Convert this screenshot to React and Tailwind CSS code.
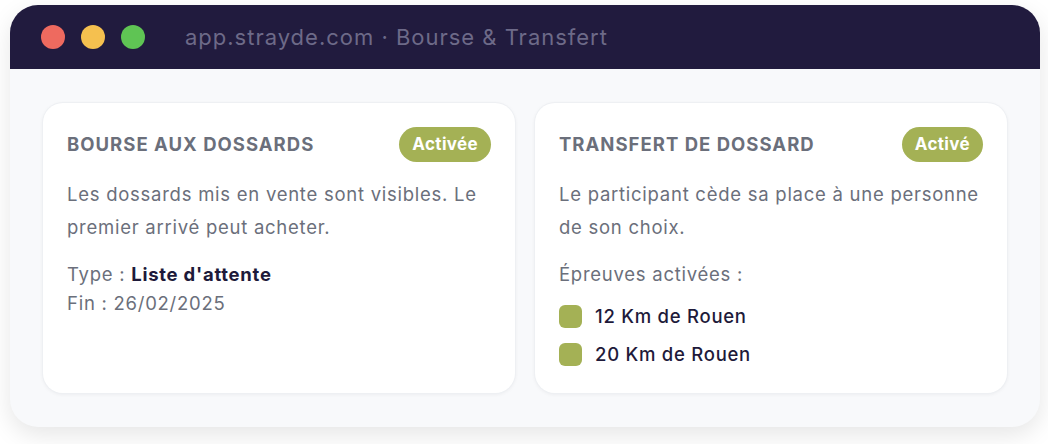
const Badge = ({ children }) => (
  <span className="inline-flex h-[35px] items-center rounded-full bg-[#a4b155] px-[13px] text-[17px] font-bold tracking-[0.02em] text-white">
    {children}
  </span>
);

const Card = ({ title, badge, children }) => (
  <div className="flex-1 rounded-[20px] bg-white px-6 pt-6 shadow-[0_1px_4px_rgba(15,23,42,0.07)] ring-1 ring-[#eef0f3]">
    <div className="flex items-center justify-between">
      <h3 className="text-[18.5px] font-bold uppercase tracking-[0.055em] text-[#6b6f7b]">{title}</h3>
      <Badge>{badge}</Badge>
    </div>
    {children}
  </div>
);

export default function App() {
  return (
    <div className="min-h-screen bg-white pl-[10px] pt-[5px] font-['Inter',sans-serif]">
      <div className="w-[1030px] overflow-hidden rounded-[28px] bg-[#f8f9fb] shadow-[0_8px_24px_rgba(0,0,0,0.10)]">
        {/* Title bar */}
        <div className="flex h-[64px] items-center bg-[#211b3e] pl-[31px]">
          <div className="flex gap-4">
            <span className="h-6 w-6 rounded-full bg-[#ee6a5f]" />
            <span className="h-6 w-6 rounded-full bg-[#f5c04f]" />
            <span className="h-6 w-6 rounded-full bg-[#5fc454]" />
          </div>
          <span className="ml-10 text-[22px] tracking-[0.045em] text-[#6d6a88]">app.strayde.com · Bourse &amp; Transfert</span>
        </div>

        {/* Content */}
        <div className="flex gap-5 px-[33px] py-[34px] text-[18.5px] tracking-[0.04em]">
          <div className="flex h-[290px] flex-1">
            <Card title="Bourse aux dossards" badge="Activée">
              <p className="mt-[16px] leading-[33px] text-[#6b6f7b]">
                Les dossards mis en vente sont visibles. Le premier arrivé peut acheter.
              </p>
              <div className="mt-[16px] leading-[29px] text-[#6b6f7b]">
                <p>
                  Type : <span className="font-bold text-[#1e1a3a]">Liste d'attente</span>
                </p>
                <p>Fin : 26/02/2025</p>
              </div>
            </Card>
          </div>
          <div className="flex h-[290px] flex-1">
            <Card title="Transfert de dossard" badge="Activé">
              <p className="mt-[16px] leading-[33px] text-[#6b6f7b]">
                Le participant cède sa place à une personne de son choix.
              </p>
              <p className="mt-[16px] leading-[29px] text-[#6b6f7b]">Épreuves activées :</p>
              <ul className="mt-[15px] flex flex-col gap-[14px]">
                {["12 Km de Rouen", "20 Km de Rouen"].map((e) => (
                  <li key={e} className="flex items-center gap-[13px] font-medium leading-[24px] text-[#1e1a3a]">
                    <span className="h-[23px] w-[23px] rounded-[6px] bg-[#a4b155]" />
                    {e}
                  </li>
                ))}
              </ul>
            </Card>
          </div>
        </div>
      </div>
    </div>
  );
}
